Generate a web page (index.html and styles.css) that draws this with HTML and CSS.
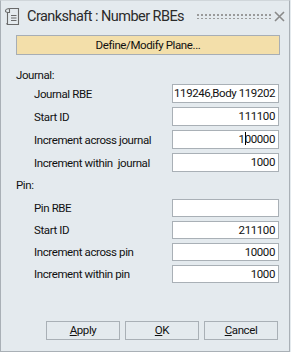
FILE: index.html
```html
<!DOCTYPE html>
<html>
<head>
<meta charset="utf-8">
<link rel="stylesheet" href="styles.css">
</head>
<body>
<div class="dialog">
  <div class="titlebar">
    <svg class="ticon" width="16" height="19" viewBox="0 0 16 19">
      <path d="M5.5 1.5 H14.5 V17.5 H3.5 V5.5" fill="none" stroke="#6a6a6a" stroke-width="1.1"/>
      <path d="M5.5 1.5 C3.5 1.5 1.5 2.5 1.5 4 C1.5 5.2 2.5 5.5 5.5 5.5 V1.5" fill="none" stroke="#6a6a6a" stroke-width="1.1"/>
      <path d="M7 8.5 H12.5 M7 11 H12.5 M7 13.5 H12.5" stroke="#6a6a6a" stroke-width="1.1"/>
      <path d="M3.5 17.5 C2.5 17.5 2 16.5 3.5 16" fill="none" stroke="#6a6a6a" stroke-width="1"/>
    </svg>
    <span class="title">Crankshaft : Number RBEs</span>
    <span class="grip"></span>
    <svg class="close" width="11" height="11" viewBox="0 0 11 11">
      <path d="M1 1 L10 10 M10 1 L1 10" stroke="#8a8a8a" stroke-width="1.6"/>
    </svg>
  </div>
  <div class="define">Define/Modify Plane...</div>

  <div class="section">Journal:</div>
  <div class="rows journal">
    <label>Journal RBE</label><div class="field left">119246,Body 119202</div>
    <label>Start ID</label><div class="field">111100</div>
    <label>Increment across journal</label><div class="field">1<span class="caret"></span>00000</div>
    <label>Increment within&nbsp; journal</label><div class="field">1000</div>
  </div>

  <div class="section pin">Pin:</div>
  <div class="rows pinrows">
    <label>Pin RBE</label><div class="field"></div>
    <label>Start ID</label><div class="field">211100</div>
    <label>Increment across pin</label><div class="field">10000</div>
    <label>Increment within pin</label><div class="field">1000</div>
  </div>

  <div class="buttons">
    <div class="btn"><u>A</u>pply</div>
    <div class="btn"><u>O</u>K</div>
    <div class="btn"><u>C</u>ancel</div>
  </div>
</div>
</body>
</html>
```
FILE: styles.css
```css
html, body {
  margin: 0;
  padding: 0;
  background: #e4eaee;
}
.dialog {
  box-sizing: border-box;
  width: 290px;
  height: 352px;
  background: #e4eaee;
  border: 1px solid #a9b0b6;
  border-top-color: #d0d6da;
  font-family: Roboto, "Liberation Sans", Arial, sans-serif;
  font-size: 11.5px;
  letter-spacing: -0.4px;
  color: #111;
  position: relative;
}
.titlebar {
  height: 33px;
  display: flex;
  align-items: center;
  padding-left: 3px;
}
.ticon {
  margin-top: -2px;
}
.title {
  font-size: 14.5px;
  letter-spacing: -0.55px;
  color: #2b2b2b;
  margin-left: 7px;
  margin-top: -2px;
}
.grip {
  flex: 1;
  height: 6px;
  margin: -3px 3px 0 12px;
  background-image: radial-gradient(circle, #9a9a9a 0.9px, transparent 1.1px);
  background-size: 4px 4px;
  background-position: 0 0;
}
.close {
  margin-right: 4px;
  margin-top: -3px;
}
.define {
  box-sizing: border-box;
  margin: 1px 0 0 15px;
  width: 264px;
  height: 20px;
  background: #f3dfaa;
  border: 1px solid #a7aeb5;
  text-align: center;
  line-height: 18px;
}
.section {
  margin: 12px 0 0 15px;
  line-height: 16px;
}
.rows {
  display: grid;
  grid-template-columns: 138px 107px;
  margin: 1px 0 0 33px;
  align-items: center;
}
.journal { row-gap: 4px; grid-auto-rows: 19px; }
.pinrows { row-gap: 4px; grid-auto-rows: 18px; margin-top: 6px; }
.section.pin { margin-top: 5px; }
.field {
  box-sizing: border-box;
  height: 100%;
  background: #fff;
  border: 1px solid #a9b0b6;
  text-align: right;
  padding: 0 3px;
  line-height: 17px;
  white-space: nowrap;
  overflow: hidden;
}
.pinrows .field { line-height: 16px; }
.field.left { text-align: left; padding: 0 1px; }
.caret {
  display: inline-block;
  width: 1px;
  height: 13px;
  background: #000;
  vertical-align: -2px;
  margin-right: -1px;
}
.buttons {
  position: absolute;
  left: 45px;
  top: 320px;
  display: flex;
  gap: 5px;
}
.btn {
  box-sizing: border-box;
  width: 74px;
  height: 19px;
  border: 1px solid #a9b0b6;
  text-align: center;
  line-height: 17px;
}
u { text-decoration-thickness: 1px; }
```
